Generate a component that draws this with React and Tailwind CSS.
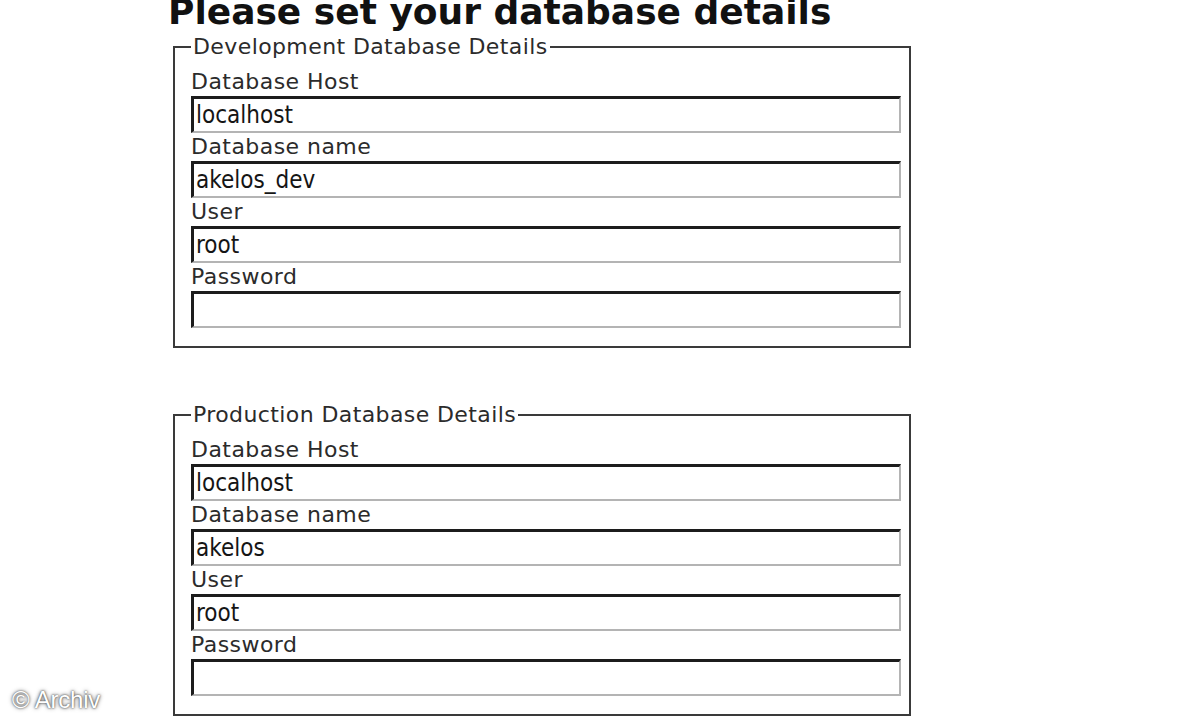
import React from "react";

const dejavu = { fontFamily: '"DejaVu Sans", Verdana, sans-serif' };

function Field({ label, value }) {
  return (
    <div className="flex flex-col">
      <label className="block h-[28px] text-[22px] leading-[28px] tracking-[0.45px] text-[#2b2b2b]" style={dejavu}>
        {label}
      </label>
      <input
        readOnly
        type="text"
        defaultValue={value}
        className="box-border h-[37px] w-[710px] border-t-[3px] border-l-[3px] border-r-2 border-b-2 border-t-[#1c1c1c] border-l-[#1c1c1c] border-r-[#b4b4b4] border-b-[#b4b4b4] bg-white pl-[2px] text-[24px] leading-[30px] text-[#151515] outline-none font-stretch-condensed font-['DejaVu_Sans',Arial,sans-serif]"
      />
    </div>
  );
}

function Group({ title, name, className }) {
  return (
    <fieldset className={"box-border w-[738px] border-2 border-[#3a3a3a] pl-[16px] pr-[8px] pb-[18px] pt-[9px] " + className}>
      <legend className="px-[2px] text-[22px] leading-[24px] tracking-[0.4px] text-[#2b2b2b]" style={dejavu}>
        {title}
      </legend>
      <Field label="Database Host" value="localhost" />
      <Field label="Database name" value={name} />
      <Field label="User" value="root" />
      <Field label="Password" value="" />
    </fieldset>
  );
}

export default function App() {
  return (
    <div className="relative h-[720px] w-[1200px] overflow-hidden bg-white">
      <div className="pl-[173px]">
        <h1
          className="-mt-[3px] -ml-[5px] h-[30px] text-[36px] font-bold leading-[30px] text-[#111]"
          style={dejavu}
        >
          Please set your database details
        </h1>
        <Group title="Development Database Details" name="akelos_dev" className="mt-[8px]" />
        <Group title="Production Database Details" name="akelos" className="mt-[55px]" />
      </div>
      <div className="absolute left-[12px] top-[682px] text-[24px] tracking-[-0.2px] text-white font-['Liberation_Sans',Arial,sans-serif] [text-shadow:0_0_2px_#333,0_0_4px_#666]">
        © Archiv
      </div>
    </div>
  );
}
